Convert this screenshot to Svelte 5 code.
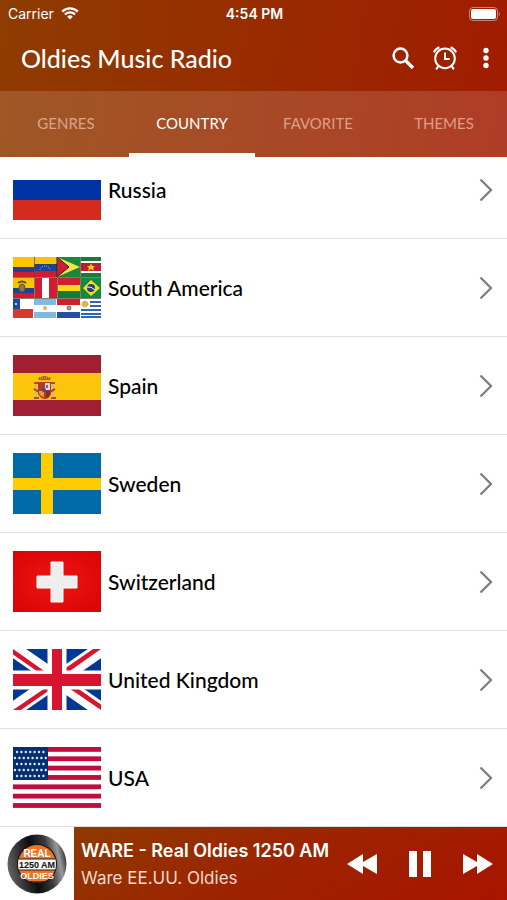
<script>
  const tabs = ['GENRES', 'COUNTRY', 'FAVORITE', 'THEMES'];
  const countries = [
    'Russia',
    'South America',
    'Spain',
    'Sweden',
    'Switzerland',
    'United Kingdom',
    'USA'
  ];

  let active = 'COUNTRY';
  let playing = true;
</script>

{#snippet flag(name)}
  <svg class="flag" viewBox="0 0 88 61" aria-hidden="true">
    {#if name === 'Russia'}
      <rect width="88" height="61" fill="#fff" />
      <rect y="21" width="88" height="20" fill="#0034a4" />
      <rect y="41" width="88" height="20" fill="#d52b1e" />
    {:else if name === 'South America'}
      <rect width="88" height="61" fill="#fff" />
      <!-- Colombia -->
      <rect width="21" height="10" fill="#fbc400" />
      <rect y="10" width="21" height="5" fill="#23408f" />
      <rect y="15" width="21" height="5" fill="#cf1c2e" />
      <!-- Venezuela -->
      <rect x="21" width="23" height="7" fill="#fbc400" />
      <rect x="21" y="7" width="23" height="7" fill="#23408f" />
      <rect x="21" y="14" width="23" height="6" fill="#cf1c2e" />
      <path d="M27 13a5 4 0 0 1 10 0" fill="none" stroke="#a9bde8" stroke-dasharray="1 1" />
      <!-- Guyana -->
      <rect x="44" width="23" height="20" fill="#178a3a" />
      <path d="M44 0L67 10L44 20Z" fill="#fce04a" />
      <path d="M44 0L56 10L44 20Z" fill="#d01c2e" stroke="#222" stroke-width="1" />
      <!-- Suriname -->
      <rect x="68" width="20" height="20" fill="#1a7a3c" />
      <rect x="68" y="4" width="20" height="12" fill="#fff" />
      <rect x="68" y="6" width="20" height="8" fill="#c11a35" />
      <path d="M78 6l1 3h3l-2 2 1 3-3-2-3 2 1-3-2-2h3z" fill="#fbd116" />
      <!-- Ecuador -->
      <rect y="21" width="21" height="10" fill="#fbc400" />
      <rect y="31" width="21" height="5" fill="#23408f" />
      <rect y="36" width="21" height="5" fill="#cf1c2e" />
      <ellipse cx="9" cy="31" rx="3" ry="4" fill="#8b7848" stroke="#5d5a3c" />
      <path d="M5 26q4-3 8 0" fill="none" stroke="#5d4c28" stroke-width="2" />
      <!-- Peru -->
      <rect x="22" y="21" width="7" height="20" fill="#cf1c2e" />
      <rect x="36" y="21" width="8" height="20" fill="#cf1c2e" />
      <!-- Bolivia -->
      <rect x="45" y="21" width="22" height="7" fill="#d0202e" />
      <rect x="45" y="28" width="22" height="6" fill="#f7dc18" />
      <rect x="45" y="34" width="22" height="7" fill="#147a38" />
      <!-- Brazil -->
      <rect x="68" y="21" width="20" height="20" fill="#118a42" />
      <path d="M70 31L78 23L87 31L78 39Z" fill="#fcdd1a" />
      <circle cx="78" cy="31" r="4" fill="#213c86" />
      <path d="M74 30q4-1 8 3" fill="none" stroke="#fff" />
      <!-- Chile -->
      <rect y="42" width="7" height="10" fill="#1d48a0" />
      <circle cx="3" cy="47" r="1" fill="#fff" />
      <rect y="52" width="20" height="9" fill="#d63a2e" />
      <!-- Argentina -->
      <rect x="21" y="42" width="22" height="6" fill="#80b9e6" />
      <rect x="21" y="55" width="22" height="6" fill="#80b9e6" />
      <circle cx="32" cy="51" r="2" fill="#e9ad45" />
      <!-- Paraguay -->
      <rect x="44" y="42" width="23" height="6" fill="#d0202e" />
      <rect x="44" y="55" width="23" height="6" fill="#2450a0" />
      <circle cx="56" cy="51" r="2" fill="#b5a26a" stroke="#77714a" />
      <!-- Uruguay -->
      {#each [44, 48, 52, 56, 59] as y}
        <rect x={y < 50 ? 77 : 68} {y} width={y < 50 ? 11 : 20} height="2" fill="#2f63b8" />
      {/each}
      <circle cx="72" cy="47" r="3" fill="#e6b93e" stroke="#b69532" stroke-dasharray="1 1" />
      <path d="M0 20.5H88M0 41.5H88M21.5 0V41M44.5 0V41M67.5 0V41" stroke="#5b5030" stroke-opacity=".75" />
    {:else if name === 'Spain'}
      <rect width="88" height="61" fill="#a01f32" />
      <rect y="18" width="88" height="27" fill="#fcc40b" />
      <path d="M26 25q-2-3 2-3 3-2 7 0 4 0 2 3z" fill="#a85a28" />
      <path d="M27 23h9" stroke="#f3c63a" stroke-dasharray="1 1" />
      <path d="M23 28v14M40 28v14" stroke="#c9b894" stroke-width="2" />
      <path d="M21 28h4M38 28h4M21 43h5M38 43h5" stroke="#a8552a" stroke-width="2" />
      <path d="M21 34l5 3M42 34l-5 3" stroke="#b2332b" stroke-width="2" />
      <path d="M25 27h13v12q-2 5-6 5t-7-5z" fill="#b33a27" />
      <path d="M32 28h5v7h-5z" fill="#e5d3df" />
      <path d="M26 36h5v6q-4-1-5-4z" fill="#dca02e" />
      <path d="M33 36h4v3q-1 3-4 4z" fill="#8c2431" />
      <path d="M34 30v3" stroke="#8b5a93" stroke-width="2" />
      <ellipse cx="31" cy="35" rx="2" ry="2" fill="#34508f" />
    {:else if name === 'Sweden'}
      <rect width="88" height="61" fill="#006aa7" />
      <rect x="28" width="12" height="61" fill="#fecc00" />
      <rect y="25" width="88" height="12" fill="#fecc00" />
    {:else if name === 'Switzerland'}
      <defs>
        <radialGradient id="swiss" r=".7">
          <stop offset="0" stop-color="#f01414" />
          <stop offset="1" stop-color="#d80404" />
        </radialGradient>
      </defs>
      <rect width="88" height="61" fill="url(#swiss)" />
      <path d="M38 11h12v14h14v12H50v14H38V37H24V25h14z" fill="#eee" stroke="#fff" />
    {:else if name === 'United Kingdom'}
      <defs>
        <clipPath id="saltire">
          <path d="M44 31H88V61ZM44 31V61H0ZM44 31H0V0ZM44 31V0H88Z" />
        </clipPath>
      </defs>
      <rect width="88" height="61" fill="#003893" />
      <path d="M0 0L88 61M88 0L0 61" stroke="#fff" stroke-width="15" />
      <path d="M0 0L88 61M88 0L0 61" stroke="#d8152f" stroke-width="9" clip-path="url(#saltire)" />
      <path d="M44 0V61M0 31H88" stroke="#fff" stroke-width="19" />
      <path d="M44 0V61" stroke="#d8152f" stroke-width="10" />
      <path d="M0 31H88" stroke="#d8152f" stroke-width="12" />
    {:else}
      <rect width="88" height="61" fill="#fff" />
      {#each Array(7) as _, i}
        <rect y={i * 9.35} width="88" height="4.8" fill="#bf0d3e" />
      {/each}
      <rect width="35" height="33" fill="#062f6e" />
      {#each [5, 11, 17, 23, 29] as y, row}
        {#each Array(row % 2 ? 8 : 7) as _, i}
          <circle cx={(row % 2 ? 2 : 4) + i * 4.4} cy={y} r="1.2" fill="#dce6f4" />
        {/each}
      {/each}
    {/if}
  </svg>
{/snippet}

<div class="app">
  <header>
    <div class="status">
      <div class="carrier">
        <span>Carrier</span>
        <svg width="18" height="13" viewBox="0 0 18 13" aria-hidden="true">
          <path d="M1.2 4.6a11 11 0 0 1 15.6 0M3.9 7.5a7.2 7.2 0 0 1 10.2 0" fill="none" stroke="#fff" stroke-width="2.2" />
          <path d="M9 12.5L6.2 9.7a4 4 0 0 1 5.6 0z" fill="#fff" />
        </svg>
      </div>
      <strong>4:54 PM</strong>
      <div class="battery">
        <svg width="32" height="14" viewBox="0 0 32 14" aria-hidden="true">
          <rect x=".5" y=".5" width="28" height="13" rx="3.5" fill="none" stroke="#fff" stroke-opacity=".45" />
          <rect x="2" y="2" width="25" height="10" rx="2" fill="#fff" />
          <path d="M29.8 4.8q2 2.2 0 4.4z" fill="#fff" fill-opacity=".5" />
        </svg>
      </div>
    </div>

    <div class="toolbar">
      <h1>Oldies Music Radio</h1>
      <button class="icon" aria-label="Search">
        <svg width="24" height="24" viewBox="0 0 24 24">
          <circle cx="9.5" cy="9.5" r="6.9" fill="none" stroke="#fff" stroke-width="2.5" />
          <path d="M14.5 14.5L22 22" stroke="#fff" stroke-width="3.2" />
        </svg>
      </button>
      <button class="icon" aria-label="Alarm">
        <svg width="24" height="24" viewBox="0 0 24 24" fill="none" stroke="#fff">
          <circle cx="12" cy="12.4" r="9.8" stroke-width="2" />
          <path d="M12 6.5v6.4h4.8" stroke-width="2" />
          <path d="M.9 6.4Q2 3 6.4 1.2M23.1 6.4Q22 3 17.6 1.2" stroke-width="2" />
          <path d="M5.2 20.3L3.2 23.4M18.8 20.3L20.8 23.4" stroke-width="2" />
        </svg>
      </button>
      <button class="icon more" aria-label="More">
        <svg width="6" height="22" viewBox="0 0 6 22" fill="#fff">
          <circle cx="3" cy="3.5" r="2.7" />
          <circle cx="3" cy="11" r="2.7" />
          <circle cx="3" cy="18.5" r="2.7" />
        </svg>
      </button>
    </div>

    <nav>
      {#each tabs as tab}
        <button class:active={tab === active} on:click={() => (active = tab)}>{tab}</button>
      {/each}
    </nav>
  </header>

  <ul>
    {#each countries as country}
      <li>
        <a href="#{country}">
          {@render flag(country)}
          <span>{country}</span>
          <svg width="14" height="24" viewBox="0 0 14 24" aria-hidden="true">
            <path d="M1.5 1.5L12 12L1.5 22.5" fill="none" stroke="#7c7c7c" stroke-width="2.2" />
          </svg>
        </a>
      </li>
    {/each}
  </ul>

  <footer>
    <div class="cover">
      <svg width="60" height="60" viewBox="0 0 60 60" role="img" aria-label="Real Oldies 1250 AM">
        <defs>
          <linearGradient id="ring" x1="0" y1=".6" x2="1" y2=".4">
            <stop offset="0" stop-color="#666" />
            <stop offset=".2" stop-color="#3a3a3a" />
            <stop offset=".45" stop-color="#0c0c0c" />
            <stop offset=".7" stop-color="#3c3c3c" />
            <stop offset=".88" stop-color="#999" />
            <stop offset="1" stop-color="#333" />
          </linearGradient>
          <clipPath id="disc"><circle cx="30" cy="30" r="19" /></clipPath>
        </defs>
        <circle cx="30" cy="30" r="29.5" fill="url(#ring)" />
        <circle cx="30" cy="30" r="20" fill="#111" />
        <g clip-path="url(#disc)">
          <rect width="60" height="60" fill="#ee7424" />
          <rect x="11" y="25" width="38" height="11" fill="#f4f4f4" />
          <path d="M11 25h38M11 36h38" stroke="#222" />
          <path d="M16 46q14 3 28 0v5H16z" fill="#111" />
        </g>
        <g class="logo">
          <text x="30" y="23" font-size="10" fill="#fff">REAL</text>
          <text x="30" y="34" font-size="9" fill="#111">1250 AM</text>
          <text x="30" y="45" font-size="9" fill="#fff">OLDIES</text>
        </g>
      </svg>
    </div>
    <div class="player">
      <div class="track">
        <strong>WARE - Real Oldies 1250 AM</strong>
        <span>Ware EE.UU. Oldies</span>
      </div>
      <div class="controls">
        <button aria-label="Previous">
          <svg width="30" height="20" viewBox="0 0 30 20" fill="#fff">
            <path d="M0 10L16 0V8L30 0V20L16 12V20Z" />
          </svg>
        </button>
        <button aria-label={playing ? 'Pause' : 'Play'} on:click={() => (playing = !playing)}>
          <svg width="24" height="26" viewBox="0 0 24 26" fill="#fff">
            {#if playing}
              <path d="M1 0h8v26H1zM15 0h8v26h-8z" />
            {:else}
              <path d="M2 0L23 13L2 26Z" />
            {/if}
          </svg>
        </button>
        <button aria-label="Next">
          <svg width="30" height="20" viewBox="0 0 30 20" fill="#fff">
            <path d="M30 10L14 0V8L0 0V20L14 12V20Z" />
          </svg>
        </button>
      </div>
    </div>
  </footer>
</div>

<style>
  .app {
    display: flex;
    flex-direction: column;
    height: 100vh;
    background: #fff;
    font-family: Lato, "Liberation Sans", sans-serif;
  }

  button {
    padding: 0;
    border: 0;
    background: none;
    color: inherit;
    font: inherit;
    cursor: pointer;
  }

  svg {
    display: block;
    flex: none;
  }

  header {
    flex: none;
    background: linear-gradient(100deg, #8e3c00, #972d00 45%, #a11b00);
    color: #fff;
  }

  .status {
    display: grid;
    grid-template-columns: 1fr auto 1fr;
    align-items: center;
    height: 27px;
    padding: 0 6px 0 8px;
    font-family: Inter, sans-serif;
    font-size: 14px;
  }

  .status strong {
    font-weight: 600;
  }

  .carrier {
    display: flex;
    align-items: center;
    gap: 7px;
  }

  .battery {
    display: flex;
    justify-content: flex-end;
  }

  .toolbar {
    display: flex;
    align-items: center;
    gap: 18px;
    height: 62px;
    padding: 0 18px 2px 21px;
  }

  h1 {
    flex: 1;
    margin: 0;
    font-size: 25px;
    font-weight: 500;
    white-space: nowrap;
  }

  .more {
    margin-left: 8px;
  }

  nav {
    display: grid;
    grid-template-columns: repeat(4, 1fr);
    height: 66px;
    padding-left: 3px;
    background: rgba(255, 255, 255, 0.15);
  }

  nav button {
    padding-top: 2px;
    border-bottom: 4px solid transparent;
    color: rgba(255, 222, 205, 0.6);
    font-size: 15px;
  }

  nav button.active {
    border-bottom-color: #fff;
    color: #fff;
  }

  /* the list is scrolled to its last row */
  ul {
    display: flex;
    flex: 1;
    flex-direction: column;
    justify-content: flex-end;
    min-height: 0;
    margin: 0;
    padding: 0;
    overflow: hidden;
    list-style: none;
  }

  li {
    flex: none;
    border-bottom: 1px solid #dedede;
  }

  li a {
    display: flex;
    align-items: center;
    gap: 7px;
    height: 97px;
    padding: 0 14px 0 13px;
    color: #000;
    font-size: 21px;
    font-weight: 500;
    text-decoration: none;
  }

  li span {
    flex: 1;
  }

  .flag {
    width: 88px;
    height: 61px;
  }

  footer {
    display: flex;
    flex: none;
    height: 73px;
  }

  .cover {
    display: flex;
    align-items: center;
    justify-content: center;
    width: 74px;
    background: #fff;
  }

  .logo {
    font-family: "Liberation Sans", sans-serif;
    font-weight: 700;
    text-anchor: middle;
  }

  .player {
    display: flex;
    flex: 1;
    align-items: center;
    justify-content: space-between;
    padding: 0 14px 0 7px;
    background: linear-gradient(150deg, #8e3a00, #9c2400 45%, #a81400);
    color: #fff;
    font-family: Inter, sans-serif;
  }

  .track {
    display: flex;
    flex-direction: column;
    gap: 5px;
    padding-top: 2px;
    font-size: 17px;
    line-height: 22px;
    white-space: nowrap;
  }

  .track strong {
    font-size: 18px;
    font-weight: 600;
  }

  .track span {
    color: #f8d9cf;
  }

  .controls {
    display: flex;
    align-items: center;
    gap: 31px;
  }
</style>
